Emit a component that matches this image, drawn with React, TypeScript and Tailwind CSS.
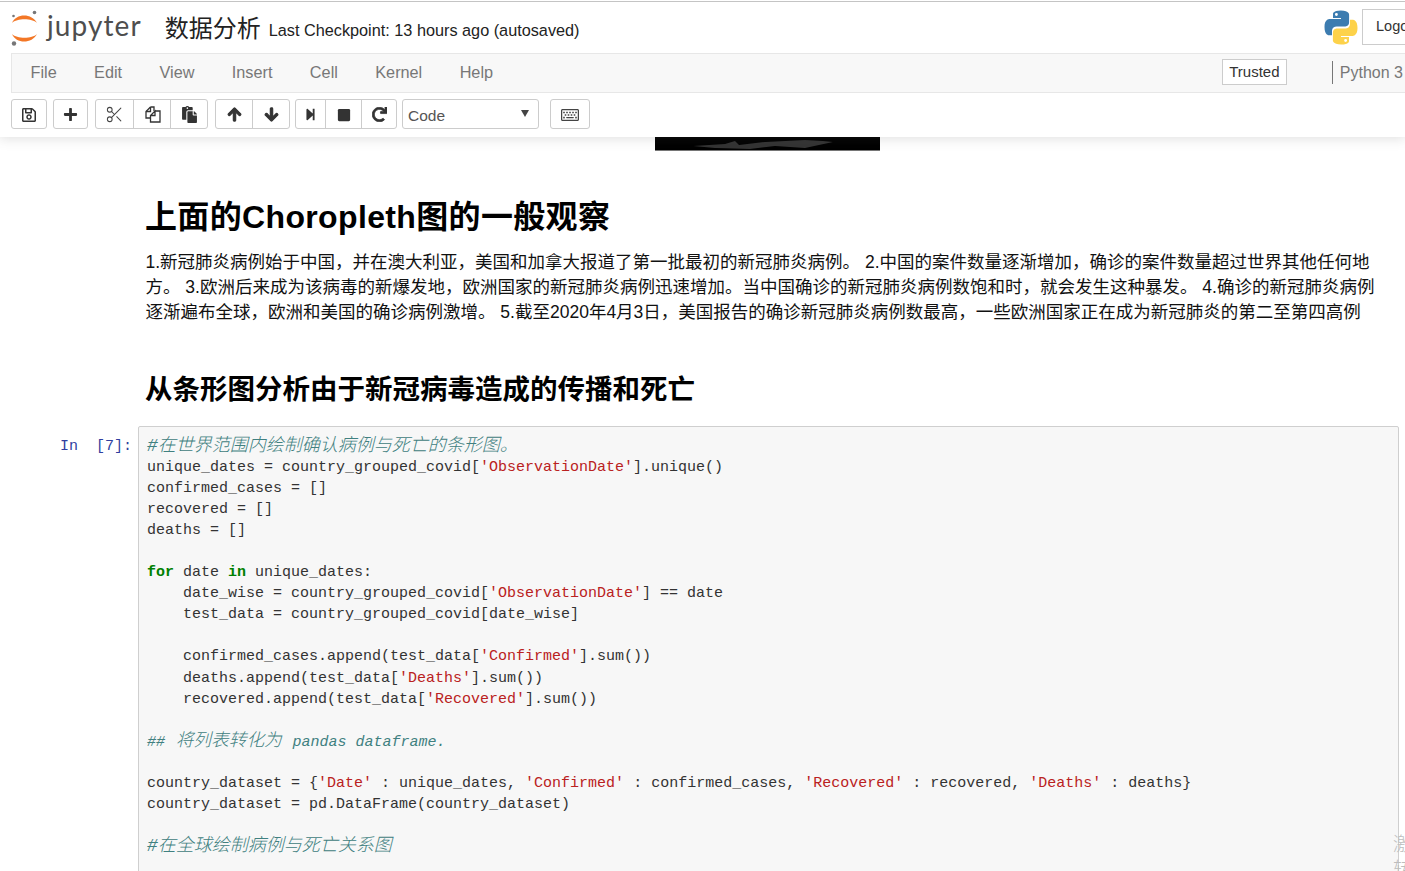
import React from 'react';
import { FaRegSave, FaPlus, FaPaste, FaArrowUp, FaArrowDown, FaStepForward, FaStop, FaRedo, FaRegKeyboard } from 'react-icons/fa';
import { Scissors } from 'lucide-react';

const sans = "font-['Liberation_Sans','Noto_Sans_CJK_SC',sans-serif]";

const JupyterLogo = () => (
  <svg width="30" height="38" viewBox="0 0 30 38" className="shrink-0">
    <path d="M2 14 C6 4 22 4 27 14 C22 9 7 9 2 14Z" fill="#f37726" />
    <path d="M2 25 C6 35 22 35 27 25 C22 30 7 30 2 25Z" fill="#f37726" />
    <circle cx="24.5" cy="3.5" r="1.8" fill="#767677" />
    <circle cx="3.5" cy="7" r="1.3" fill="#767677" />
    <circle cx="4" cy="34.5" r="2.2" fill="#767677" />
  </svg>
);

const PythonLogo = () => (
  <svg width="36" height="37" viewBox="0 0 36 36" className="shrink-0">
    <path
      d="M17.8 1C9.5 1 10 4.6 10 4.6V8.4h8v1.1H6.9S1.5 8.9 1.5 17.5 6.2 25.8 6.2 25.8H9v-4s-.2-4.7 4.6-4.7h8s4.5.1 4.5-4.3V5.5S26.8 1 17.8 1zM13.4 3.5a1.4 1.4 0 1 1 0 2.9 1.4 1.4 0 0 1 0-2.9z"
      fill="#3c7cb0"
    />
    <path
      d="M17.8 1C9.5 1 10 4.6 10 4.6V8.4h8v1.1H6.9S1.5 8.9 1.5 17.5 6.2 25.8 6.2 25.8H9v-4s-.2-4.7 4.6-4.7h8s4.5.1 4.5-4.3V5.5S26.8 1 17.8 1zM13.4 3.5a1.4 1.4 0 1 1 0 2.9 1.4 1.4 0 0 1 0-2.9z"
      fill="#fdd24a"
      transform="rotate(180 18 18)"
    />
  </svg>
);

const CopyIcon = () => (
  <svg width="17" height="17" viewBox="0 0 17 17" fill="none" stroke="#333" strokeWidth="1.3">
    <path d="M6.5 1 H10 V5 M6.5 1 L2 5.5 V12 H6" />
    <path d="M2 5.5 H6.5 V1" />
    <path d="M11 5 H16 V16 H6.5 V9.5 L11 5 V9.5 H6.5" />
  </svg>
);

const ToolBtn = ({ w, last, children }: { w: string; last?: boolean; children: React.ReactNode }) => (
  <div className={`${w} h-full pt-[1px] flex items-center justify-center text-[#333] ${last ? '' : 'border-r border-[#ccc]'}`}>{children}</div>
);

const Group = ({ children, className }: { children: React.ReactNode; className?: string }) => (
  <div className={`h-[30px] flex bg-white border border-[#ccc] rounded-[3px] ${className ?? ''}`}>{children}</div>
);

const S = ({ children }: { children: React.ReactNode }) => <span className="text-[#ba2121]">{children}</span>;
const K = ({ children }: { children: React.ReactNode }) => <span className="text-[#008000] font-bold">{children}</span>;
const C = ({ children }: { children: React.ReactNode }) => (
  <span className="italic text-[#408080] text-[18px] font-light">{children}</span>
);

const codeLines: React.ReactNode[] = [
  <C>#在世界范围内绘制确认病例与死亡的条形图。</C>,
  <>unique_dates = country_grouped_covid[<S>'ObservationDate'</S>].unique()</>,
  <>confirmed_cases = []</>,
  <>recovered = []</>,
  <>deaths = []</>,
  null,
  <><K>for</K> date <K>in</K> unique_dates:</>,
  <>    date_wise = country_grouped_covid[<S>'ObservationDate'</S>] == date</>,
  <>    test_data = country_grouped_covid[date_wise]</>,
  null,
  <>    confirmed_cases.append(test_data[<S>'Confirmed'</S>].sum())</>,
  <>    deaths.append(test_data[<S>'Deaths'</S>].sum())</>,
  <>    recovered.append(test_data[<S>'Recovered'</S>].sum())</>,
  null,
  <span className="italic text-[#408080]">##<span className="text-[17.7px] font-light"> 将列表转化为 </span>pandas dataframe.</span>,
  null,
  <>country_dataset = {'{'}<S>'Date'</S> : unique_dates, <S>'Confirmed'</S> : confirmed_cases, <S>'Recovered'</S> : recovered, <S>'Deaths'</S> : deaths{'}'}</>,
  <>country_dataset = pd.DataFrame(country_dataset)</>,
  null,
  <C>#在全球绘制病例与死亡关系图</C>,
];

const paragraph = [
  '1.新冠肺炎病例始于中国，并在澳大利亚，美国和加拿大报道了第一批最初的新冠肺炎病例。 2.中国的案件数量逐渐增加，确诊的案件数量超过世界其他任何地',
  '方。 3.欧洲后来成为该病毒的新爆发地，欧洲国家的新冠肺炎病例迅速增加。当中国确诊的新冠肺炎病例数饱和时，就会发生这种暴发。 4.确诊的新冠肺炎病例',
  '逐渐遍布全球，欧洲和美国的确诊病例激增。 5.截至2020年4月3日，美国报告的确诊新冠肺炎病例数最高，一些欧洲国家正在成为新冠肺炎的第二至第四高例',
];

const menu = ['File', 'Edit', 'View', 'Insert', 'Cell', 'Kernel', 'Help'];

export default function App() {
  return (
    <div className={`relative w-[1405px] h-[871px] overflow-hidden bg-white text-black ${sans}`}>
      {/* Fixed header */}
      <div className="relative z-10 h-[137px] pt-[1px] bg-white shadow-[0_0_12px_1px_rgba(87,87,87,0.2)]">
        <div className="h-[52px] pt-[2px] border-t border-[#c4c4c4] flex items-center pl-[10px]">
          <div className="mb-[1px]"><JupyterLogo /></div>
          <span className="ml-[7px] mb-[7px] text-[28px] leading-none text-[#4e4e4e] font-['Lato',sans-serif] tracking-[1.1px]">jupyter</span>
          <span className="ml-[23px] text-[24px] leading-none text-[#222]">数据分析</span>
          <span className="ml-[8px] mt-[3px] text-[16.25px] leading-none text-[#222]">Last Checkpoint: 13 hours ago (autosaved)</span>
          <div className="ml-auto flex items-center gap-[3px] mt-[-2px] mr-[-42px]">
            <PythonLogo />
            <div className="w-[85px] h-[36px] mb-[2px] border border-[#ccc] bg-white flex items-center pl-[13px] text-[14.5px] text-[#333]">Logout</div>
          </div>
        </div>
        <div className="ml-[11px] h-[40px] pb-[2px] bg-[#f8f8f8] border-y border-l border-[#e7e7e7] flex items-center pl-[18.5px] text-[16.25px] text-[#777]">
          <div className="flex gap-[37.4px]">
            {menu.map((m) => <span key={m}>{m}</span>)}
          </div>
          <div className="ml-auto flex items-center">
            <div className="w-[65px] h-[26px] bg-white border border-[#ccc] text-[#333] text-[15px] flex items-center justify-center">Trusted</div>
            <div className="ml-[45px] h-[23px] border-l border-[#777] pl-[7px] leading-[23px] whitespace-nowrap text-[16px] pr-[2px]">Python 3</div>
          </div>
        </div>
        <div className="h-[44px] pl-[11px] pt-[6px] flex items-start">
          <Group><ToolBtn w="w-[34px]" last><FaRegSave size={16} /></ToolBtn></Group>
          <Group className="ml-[6px]"><ToolBtn w="w-[33px]" last><FaPlus size={15} /></ToolBtn></Group>
          <Group className="ml-[7px]">
            <ToolBtn w="w-[38px]"><Scissors size={19} strokeWidth={1.3} className="text-[#444]" /></ToolBtn>
            <ToolBtn w="w-[37px]"><CopyIcon /></ToolBtn>
            <ToolBtn w="w-[36px]" last><FaPaste size={17} /></ToolBtn>
          </Group>
          <Group className="ml-[7px]">
            <ToolBtn w="w-[37px]"><FaArrowUp size={15} stroke="currentColor" strokeWidth={40} /></ToolBtn>
            <ToolBtn w="w-[36px]" last><FaArrowDown size={15} stroke="currentColor" strokeWidth={40} /></ToolBtn>
          </Group>
          <Group className="ml-[5px]">
            <ToolBtn w="w-[30px]"><FaStepForward size={13} /></ToolBtn>
            <ToolBtn w="w-[36px]"><FaStop size={14} /></ToolBtn>
            <ToolBtn w="w-[34px]" last><FaRedo size={15} stroke="currentColor" strokeWidth={25} /></ToolBtn>
          </Group>
          <div className="ml-[5px] w-[137px] h-[30px] bg-white border border-[#ccc] rounded-[3px] flex items-center justify-between pl-[5px] pr-[9px] text-[15.5px] text-[#555]">
            <span className="mt-[3px]">Code</span>
            <span className="w-0 h-0 border-x-[4px] border-x-transparent border-t-[7px] border-t-[#444] mt-[-1px]" />
          </div>
          <Group className="ml-[11px]"><ToolBtn w="w-[38px]" last><FaRegKeyboard size={18} className="text-[#444]" /></ToolBtn></Group>
        </div>
      </div>

      {/* Bottom sliver of the previous cell's output */}
      <div className="ml-[655px] w-[225px] h-[14px] bg-black border-b border-[#777]">
        <svg width="225" height="13" viewBox="0 0 225 13">
          <path d="M38 9 L70 7 L80 4 L84 8 L110 5 L150 3 L168 4 L178 5 L150 11 L120 9 L95 12 L60 11Z" fill="#333" />
        </svg>
      </div>

      {/* Markdown cells */}
      <div className="pl-[145px] whitespace-nowrap">
        <h1 className="mt-[46px] text-[32px] leading-[40px] font-bold text-black tracking-[0.35px]">上面的Choropleth图的一般观察</h1>
        <div className="mt-[13px] ml-[0.5px] text-[17.5px] leading-[25px] text-[#111]">
          {paragraph.map((line) => <div key={line}>{line}</div>)}
        </div>
        <h2 className="mt-[47px] text-[27.5px] leading-[36px] font-bold text-black">从条形图分析由于新冠病毒造成的传播和死亡</h2>
      </div>

      {/* Code cell */}
      <div className="mt-[18px] flex font-['Liberation_Mono','Noto_Sans_CJK_SC',monospace] text-[15px]">
        <div className="w-[138px] pl-[60px] pt-[10px] leading-[21px] text-[#303f9f] whitespace-pre">In  [7]:</div>
        <div className="w-[1261px] h-[470px] bg-[#f7f7f7] border border-[#cfcfcf] rounded-[2px] pl-[8px] pt-[9px] text-[#333]">
          {codeLines.map((line, i) => (
            <div key={i} className="h-[21.05px] leading-[21px] whitespace-pre">{line}</div>
          ))}
        </div>
      </div>

      {/* Activation watermark over the page edge */}
      <div className="absolute left-[1393px] top-[830px] z-20 w-[300px] text-[19px] leading-[25px] text-[#bdbdbd] font-['Noto_Sans_CJK_SC',sans-serif] font-light whitespace-nowrap">
        <div>激活 Windows</div>
        <div>转到“设置”以激活 Windows。</div>
      </div>
    </div>
  );
}
